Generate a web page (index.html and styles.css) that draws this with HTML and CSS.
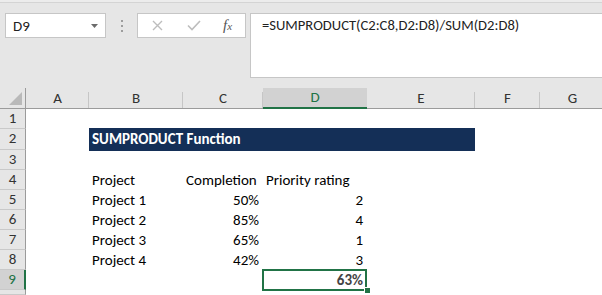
FILE: index.html
```html
<!DOCTYPE html>
<html lang="en">
<head>
    <meta charset="UTF-8">
    <meta name="viewport" content="width=device-width, initial-scale=1.0">
    <title>SUMPRODUCT Function</title>
    <link rel="stylesheet" href="styles.css">
</head>
<body>
    <div class="ribbon-edge"></div>

    <div class="formula-row">
        <div class="name-box">
            <span>D9</span>
            <svg class="caret" width="7" height="4" viewBox="0 0 7 4"><path d="M0 0h7L3.5 4z" fill="#6b6b6b"/></svg>
        </div>
        <div class="grip">
            <i></i><i></i><i></i>
        </div>
        <div class="fx-box">
            <svg width="11" height="11" viewBox="0 0 11 11"><path d="M1 1l9 9M10 1l-9 9" stroke="#bdbdbd" stroke-width="1.4" fill="none"/></svg>
            <svg width="14" height="11" viewBox="0 0 14 11"><path d="M1 5.5l4 4L13 1" stroke="#bdbdbd" stroke-width="1.6" fill="none"/></svg>
            <span class="fx">f<sub>x</sub></span>
        </div>
        <div class="formula-box">=SUMPRODUCT(C2:C8,D2:D8)/SUM(D2:D8)</div>
    </div>

    <div class="sheet">
        <!-- column headers -->
        <div class="corner"><svg width="13" height="13" viewBox="0 0 13 13"><path d="M13 0v13H0z" fill="#b9b9b9"/></svg></div>
        <div class="col-head">A</div>
        <div class="col-head">B</div>
        <div class="col-head">C</div>
        <div class="col-head active">D</div>
        <div class="col-head">E</div>
        <div class="col-head">F</div>
        <div class="col-head">G</div>

        <!-- row 1 -->
        <div class="row-head">1</div>
        <div></div><div></div><div></div><div></div><div></div><div></div><div></div>

        <!-- row 2 -->
        <div class="row-head">2</div>
        <div></div>
        <div class="title-band">SUMPRODUCT Function</div>
        <div></div><div></div>

        <!-- row 3 -->
        <div class="row-head">3</div>
        <div></div><div></div><div></div><div></div><div></div><div></div><div></div>

        <!-- row 4 -->
        <div class="row-head">4</div>
        <div></div>
        <div class="cell">Project</div>
        <div class="cell">Completion</div>
        <div class="cell">Priority rating</div>
        <div></div><div></div><div></div>

        <!-- rows 5-8 -->
        <div class="row-head">5</div>
        <div></div>
        <div class="cell">Project 1</div>
        <div class="cell num">50%</div>
        <div class="cell num">2</div>
        <div></div><div></div><div></div>

        <div class="row-head">6</div>
        <div></div>
        <div class="cell">Project 2</div>
        <div class="cell num">85%</div>
        <div class="cell num">4</div>
        <div></div><div></div><div></div>

        <div class="row-head">7</div>
        <div></div>
        <div class="cell">Project 3</div>
        <div class="cell num">65%</div>
        <div class="cell num">1</div>
        <div></div><div></div><div></div>

        <div class="row-head">8</div>
        <div></div>
        <div class="cell">Project 4</div>
        <div class="cell num">42%</div>
        <div class="cell num">3</div>
        <div></div><div></div><div></div>

        <!-- row 9: result -->
        <div class="row-head active">9</div>
        <div></div><div></div><div></div>
        <div class="cell num result selected">63%</div>
        <div></div><div></div><div></div>

        <!-- row 10 only peeks in at the bottom edge -->
        <div class="row-head"></div>
        <div></div><div></div><div></div><div></div><div></div><div></div><div></div>
    </div>
</body>
</html>
```

FILE: styles.css
```css
body {
    margin: 0;
    width: 602px;
    height: 295px;
    overflow: hidden;
    background-color: #e6e6e6;
    font-family: Carlito, Lato, "Liberation Sans", sans-serif;
    font-size: 15px;
    color: #000;
}
.ribbon-edge {
    height: 2px;
    background-color: #ececec;
    border-bottom: 1px solid #d4d4d4;
}
.formula-row {
    display: flex;
    align-items: flex-start;
    padding: 10px 0 0 5px;
    height: 85px;
    box-sizing: border-box;
}
.name-box {
    width: 101px;
    height: 25px;
    box-sizing: border-box;
    background-color: #fff;
    border: 1px solid #c6c6c6;
    display: flex;
    align-items: center;
    justify-content: space-between;
    padding: 0 7px 0 7px;
    color: #222;
}
.grip {
    width: 31px;
    height: 25px;
    display: flex;
    flex-direction: column;
    align-items: center;
    justify-content: center;
    gap: 3px;
}
.grip i {
    width: 2px;
    height: 2px;
    background-color: #9d9d9d;
}
.fx-box {
    width: 109px;
    height: 25px;
    box-sizing: border-box;
    background-color: #fff;
    border: 1px solid #c6c6c6;
    display: flex;
    align-items: center;
    padding-left: 14px;
    gap: 24px;
}
.fx {
    font-family: "Liberation Serif", serif;
    font-style: italic;
    font-size: 15px;
    color: #555;
    margin-left: -2px;
}
.fx sub {
    font-size: 11px;
    vertical-align: 0;
}
.formula-box {
    flex: 1;
    margin-left: 4px;
    height: 65px;
    box-sizing: border-box;
    background-color: #fff;
    border: 1px solid #c6c6c6;
    border-right: none;
    padding: 2px 0 0 11px;
    font-size: 14.6px;
    color: #222;
}
.sheet {
    display: grid;
    grid-template-columns: 26px 63px 94px 80px 104px 108px 65px 65px;
    grid-template-rows: 21px 20px 21px repeat(7, 20px) 5px;
    background-color: #fff;
}
.corner {
    background-color: #e6e6e6;
    border-right: 1px solid #9b9b9b;
    border-bottom: 1px solid #9b9b9b;
    display: flex;
    align-items: flex-end;
    justify-content: flex-end;
    padding: 0 3px 3px 0;
}
.col-head {
    background: #e6e6e6 linear-gradient(#c6c6c6, #c6c6c6) no-repeat right bottom / 1px 16px;
    border-bottom: 1px solid #9b9b9b;
    text-align: center;
    line-height: 20px;
    color: #333;
}
.col-head.active {
    background: #d2d2d2;
    border-bottom: 2px solid #217346;
    line-height: 19px;
    color: #217346;
}
.row-head {
    background-color: #e6e6e6;
    border-right: 1px solid #9b9b9b;
    border-bottom: 1px solid #c9c9c9;
    text-align: center;
    line-height: 19px;
    color: #333;
}
.row-head.active {
    background-color: #d2d2d2;
    border-right: 2px solid #217346;
    color: #217346;
}
.title-band {
    grid-column: span 4;
    margin: -1px 0;
    background-color: #142f57;
    color: #fff;
    font-weight: bold;
    line-height: 22px;
    padding-left: 3px;
}
.cell {
    padding: 0 3px;
    line-height: 20px;
    white-space: nowrap;
}
.cell.num {
    text-align: right;
    padding-right: 4px;
}
.result {
    font-weight: bold;
    color: #444;
    padding-right: 5px;
}
.selected {
    position: relative;
}
.selected::after {
    content: "";
    position: absolute;
    top: -1px;
    left: -1px;
    right: 0;
    bottom: -1px;
    border: 2px solid #217346;
}
.selected::before {
    content: "";
    position: absolute;
    right: -3px;
    bottom: -3px;
    width: 5px;
    height: 5px;
    background-color: #217346;
    border: 1px solid #fff;
    border-width: 1px 0 0 1px;
    z-index: 1;
}
```
